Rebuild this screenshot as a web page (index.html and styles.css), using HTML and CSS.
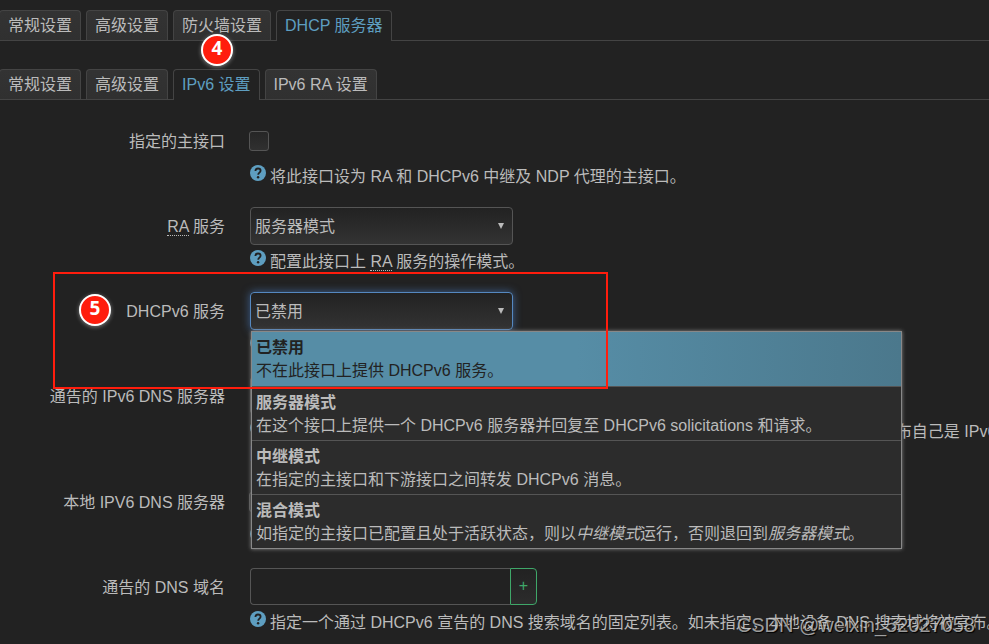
FILE: index.html
```
<!DOCTYPE html>
<html lang="zh-CN">
<head>
  <meta charset="UTF-8">
  <title>DHCP 服务器 - IPv6 设置</title>
  <link rel="stylesheet" href="styles.css">
</head>
<body>

  <svg class="defs" width="0" height="0">
    <symbol id="help" viewBox="0 0 16 16">
      <circle cx="8" cy="8" r="8" fill="#5e9ec0"/>
      <path d="M5.4 6.1C5.4 4.4 6.5 3.5 8 3.5s2.6.9 2.6 2.3c0 1.8-2.4 1.9-2.4 3.9" fill="none" stroke="#222" stroke-width="1.8"/>
      <circle cx="8.1" cy="12.2" r="1.2" fill="#222"/>
    </symbol>
  </svg>

  <nav class="tabs">
    <a href="#">常规设置</a>
    <a href="#">高级设置</a>
    <a href="#">防火墙设置</a>
    <a href="#" class="active">DHCP 服务器</a>
  </nav>

  <nav class="tabs">
    <a href="#">常规设置</a>
    <a href="#">高级设置</a>
    <a href="#" class="active">IPv6 设置</a>
    <a href="#">IPv6 RA 设置</a>
  </nav>

  <form class="form">
    <div class="row">
      <label class="title" for="master">指定的主接口</label>
      <div class="field">
        <div class="control"><input type="checkbox" id="master"></div>
        <div class="help"><svg><use href="#help"/></svg>将此接口设为 RA 和 DHCPv6 中继及 NDP 代理的主接口。</div>
      </div>
    </div>

    <div class="row">
      <label class="title" for="ra"><abbr>RA</abbr> 服务</label>
      <div class="field">
        <div class="control select">
          <select id="ra"><option>服务器模式</option></select>
        </div>
        <div class="help"><svg><use href="#help"/></svg>配置此接口上 <abbr>RA</abbr> 服务的操作模式。</div>
      </div>
    </div>

    <div class="row">
      <label class="title" for="dhcpv6">DHCPv6 服务</label>
      <div class="field">
        <div class="control select open">
          <select id="dhcpv6"><option>已禁用</option></select>
          <ul class="dropdown">
            <li class="selected"><strong>已禁用</strong>不在此接口上提供 DHCPv6 服务。</li>
            <li><strong>服务器模式</strong>在这个接口上提供一个 DHCPv6 服务器并回复至 DHCPv6 solicitations 和请求。</li>
            <li><strong>中继模式</strong>在指定的主接口和下游接口之间转发 DHCPv6 消息。</li>
            <li><strong>混合模式</strong>如指定的主接口已配置且处于活跃状态，则以<em>中继模式</em>运行，否则退回到<em>服务器模式</em>。</li>
          </ul>
        </div>
        <div class="help"><svg><use href="#help"/></svg></div>
      </div>
    </div>

    <div class="row">
      <label class="title" for="dns">通告的 IPv6 DNS 服务器</label>
      <div class="field">
        <div class="control list"><input type="text" id="dns"><button type="button">+</button></div>
        <div class="help"><svg><use href="#help"/></svg>指定一个通过 DHCPv6宣告的固定的 IPv6 DNS 服务器地址列表。如未指定，设备将会宣布自己是 IPv6 DNS 服务器，<br>除非禁用此项。</div>
      </div>
    </div>

    <div class="row">
      <label class="title" for="localdns">本地 IPV6 DNS 服务器</label>
      <div class="field">
        <div class="control"><input type="checkbox" id="localdns"></div>
        <div class="help"><svg><use href="#help"/></svg></div>
      </div>
    </div>

    <div class="row">
      <label class="title" for="domain">通告的 DNS 域名</label>
      <div class="field">
        <div class="control list"><input type="text" id="domain"><button type="button">+</button></div>
        <div class="help"><svg><use href="#help"/></svg>指定一个通过 DHCPv6 宣告的 DNS 搜索域名的固定列表。如未指定，本地设备 DNS 搜索域将被宣布。</div>
      </div>
    </div>
  </form>

  <!-- Step markers -->
  <div class="frame"></div>
  <div class="step step-4">4</div>
  <div class="step step-5">5</div>

  <div class="watermark">CSDN @weixin_52027058</div>

</body>
</html>
```
FILE: styles.css
```
* {
  box-sizing: border-box;
}

body {
  position: relative;
  height: 100vh;
  margin: 0;
  padding-top: 10px;
  overflow: hidden;
  background: #222;
  color: #bbb;
  font-family: "Liberation Sans", "Noto Sans CJK SC", sans-serif;
  font-size: 16px;
  line-height: 22px;
}

.defs {
  position: absolute;
}

.tabs {
  display: flex;
  gap: 5px;
  height: 31px;
  margin: 0 0 28px -1px;
  border-bottom: 1px solid #444;
}

.tabs a {
  height: 30px;
  padding: 4px 8px;
  border: 1px solid #444;
  border-bottom: none;
  border-radius: 4px 4px 0 0;
  background: linear-gradient(#333, #303030);
  color: #bbb;
  text-decoration: none;
  white-space: nowrap;
}

.tabs .active {
  height: 31px;
  background: #222;
  color: #5e9ec0;
}

.form {
  margin-top: -6px;
}

.row {
  display: flex;
  gap: 25px;
  margin-bottom: 20px;
}

.title {
  width: 225px;
  flex: none;
  padding-top: 1px;
  line-height: 38px;
  text-align: right;
}

.field {
  flex: 1;
  min-width: 0;
}

.control {
  position: relative;
  display: flex;
  align-items: center;
  height: 38px;
}

abbr {
  border-bottom: 1px dotted #bbb;
}

input[type="checkbox"] {
  appearance: none;
  width: 20px;
  height: 20px;
  margin: 0 0 0 -1px;
  border: 1px solid #555;
  border-radius: 3px;
  background: linear-gradient(#262626, #303030);
}

.select {
  width: 263px;
}

.select::after {
  content: "";
  position: absolute;
  top: 16px;
  right: 9px;
  border: 3px solid transparent;
  border-top: 6px solid #bbb;
  border-bottom: none;
}

select {
  appearance: none;
  width: 100%;
  height: 38px;
  padding: 2px 4px 0;
  border: 1px solid #555;
  border-radius: 4px;
  background: linear-gradient(#222, #333);
  color: #bbb;
  font: inherit;
}

.open select {
  border-color: #5588c0;
  box-shadow: 0 0 8px rgba(82, 140, 220, 0.6);
}

.dropdown {
  position: absolute;
  z-index: 1;
  top: 39px;
  left: 1px;
  width: 651px;
  margin: 0;
  padding: 0;
  border: 1px solid #888;
  background: #2c2c2c;
  box-shadow: 0 0 4px #888;
  list-style: none;
}

.dropdown li {
  padding: 4px 4px 3px;
  border-bottom: 1px solid #555;
  line-height: 23px;
  white-space: nowrap;
}

.dropdown li:last-child {
  border-bottom: none;
}

.dropdown strong {
  display: block;
}

.dropdown .selected {
  padding-bottom: 4px;
  background: linear-gradient(90deg, #568da6 50%, #4b788c);
  color: #222;
}

.help {
  height: 22px;
  margin-top: 5px;
  white-space: nowrap;
}

.help:has(br) {
  height: 43px;
}

.help svg {
  width: 16px;
  height: 16px;
  margin-right: 4px;
  vertical-align: 1px;
}

.list {
  align-items: flex-start;
}

.list input {
  width: 260px;
  height: 37px;
  padding: 0 6px;
  border: 1px solid #555;
  border-right: none;
  border-radius: 4px 0 0 4px;
  background: #222;
  color: #bbb;
  font: inherit;
}

.list button {
  width: 27px;
  height: 37px;
  padding: 0 0 2px;
  border: 1px solid #3fa769;
  border-radius: 0 4px 4px 0;
  background: linear-gradient(#222, #2c2c2c);
  color: #3fa769;
  font: inherit;
}

.frame {
  position: absolute;
  z-index: 2;
  top: 272px;
  left: 53px;
  width: 555px;
  height: 117px;
  border: 2px solid #ff1d0d;
}

.step {
  position: absolute;
  z-index: 2;
  width: 32px;
  height: 32px;
  border: 2px solid #fff;
  border-radius: 50%;
  background: #ff1d0d;
  box-shadow: 0 1px 4px rgba(255, 255, 255, 0.4);
  color: #fff;
  font: bold 19px/25px "Open Sans", sans-serif;
  text-align: center;
}

.step-4 {
  top: 34px;
  left: 201px;
}

.step-5 {
  top: 294px;
  left: 79px;
}

.watermark {
  position: absolute;
  right: 14px;
  bottom: 8px;
  color: rgba(220, 220, 220, 0.7);
  font-size: 20px;
  text-shadow: 1px 1px 1px #000;
}
```
